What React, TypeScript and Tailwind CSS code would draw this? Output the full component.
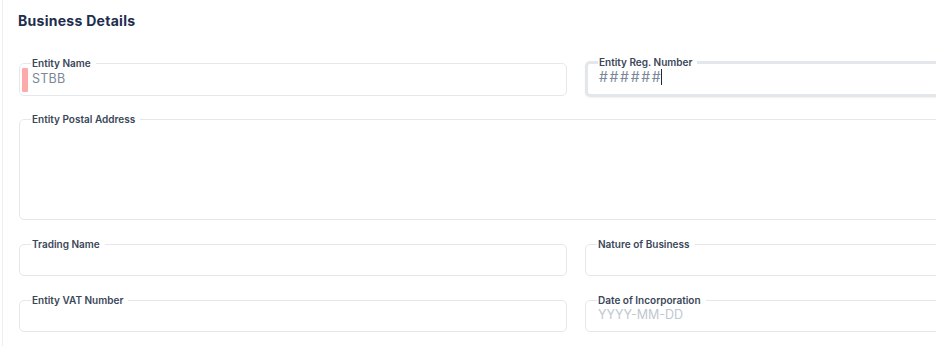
import clsx from "clsx"
import type { ReactNode } from "react"

const font = { fontFamily: "Inter, 'Open Sans', sans-serif" }

function Field({
    label,
    children,
    focused,
    className,
}: {
    label: string
    children?: ReactNode
    focused?: boolean
    className?: string
}) {
    return (
        <fieldset
            className={clsx(
                "relative rounded-[5px] min-w-0",
                focused
                    ? "border-[3px] border-[#e3e6eb] px-[11px] shadow-[0_1px_2px_rgba(0,0,0,0.06)]"
                    : "border border-[#e4e7ec] px-[12px]",
                className
            )}
        >
            <legend className="px-[1px] -ml-[1px] text-[10px] leading-[12px] font-semibold text-[#3a4659]">
                {label}
                <span className="inline-block w-[4px]" />
            </legend>
            {children}
        </fieldset>
    )
}

export default function App() {
    return (
        <main className="w-[936px] h-[346px] overflow-hidden bg-white" style={font}>
            <div className="ml-[2px] h-full border-l border-[#eceef2] pl-[16px]">
                <h1 className="pt-[12px] text-[14px] leading-[18px] font-bold text-[#1d2d4d] -ml-[1px] tracking-[0.02em]">
                    Business Details
                </h1>

                <div className="mt-[27px] flex flex-col w-[1114px]">
                    <div className="flex gap-[18px] items-start h-[39px]">
                        <Field label="Entity Name" className="w-[548px] h-[39px] shrink-0">
                            <div className="absolute left-[2px] top-[-1px] w-[6px] h-[24px] bg-[#fdaaa8] rounded-[1px]" />
                            <div className="text-[12.5px] leading-[20px] text-[#7b8799] tracking-[0.02em]">STBB</div>
                        </Field>
                        <Field label="Entity Reg. Number" focused className="w-[548px] h-[41px] -mt-[1px] shrink-0">
                            <div className="flex items-center text-[14px] leading-[20px] text-[#7b8799] -mt-[1px] tracking-[0.12em]">
                                ######
                                <span className="inline-block w-[1px] h-[16px] bg-[#1f2937] -ml-[1px]" />
                            </div>
                        </Field>
                    </div>

                    <Field label="Entity Postal Address" className="mt-[17px] w-[1114px] h-[107px]" />

                    <div className="mt-[18px] flex gap-[18px]">
                        <Field label="Trading Name" className="w-[548px] h-[38px]" />
                        <Field label="Nature of Business" className="w-[548px] h-[38px]" />
                    </div>

                    <div className="mt-[18px] flex gap-[18px]">
                        <Field label="Entity VAT Number" className="w-[548px] h-[38px]" />
                        <Field label="Date of Incorporation" className="w-[548px] h-[38px]">
                            <div className="text-[12.5px] leading-[20px] text-[#c1c7d1] -mt-[1px]">YYYY-MM-DD</div>
                        </Field>
                    </div>
                </div>
            </div>
        </main>
    )
}
